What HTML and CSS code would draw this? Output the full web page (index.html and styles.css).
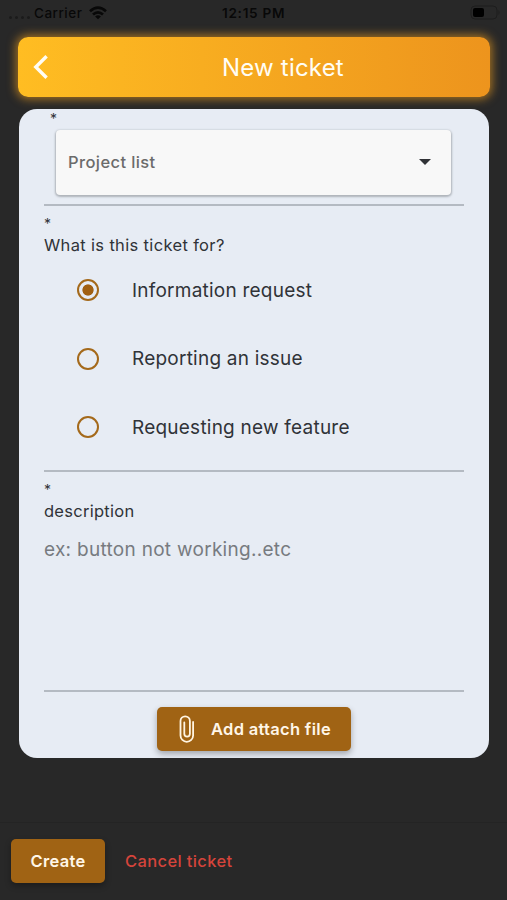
FILE: index.html
```html
<!DOCTYPE html>
<html lang="en">
<head>
<meta charset="utf-8">
<title>New ticket</title>
<link rel="stylesheet" href="styles.css">
</head>
<body>
<div class="status">
  <div class="carrier">
    <span class="dots"><i></i><i></i><i></i><i></i></span>
    <span class="carrier-name">Carrier</span>
    <svg width="18" height="14" viewBox="0 0 18 14" fill="none" stroke="#080808" stroke-width="2.7"><path d="M1 5.2Q9-2 17 5.2M4 8.6Q9 4.2 14 8.6"/><path d="M9 13.3L6.1 10.4Q9 8 11.9 10.4Z" fill="#080808" stroke="none"/></svg>
  </div>
  <span class="clock">12:15 PM</span>
  <svg class="battery" width="31" height="15" viewBox="0 0 31 15"><rect x="1" y="1" width="26" height="13" rx="4" fill="none" stroke="#1d1d1d"/><path d="M28.5 5Q30.5 7.5 28.5 10Z" fill="#1d1d1d"/><rect x="3" y="3" width="11" height="9" rx="2" fill="#000"/></svg>
</div>
<header class="header">
  <svg class="back" width="16" height="26" viewBox="0 0 16 26" fill="none" stroke="#fffdf5" stroke-width="3.4"><path d="M13.6 2.3L2.8 13L13.6 23.7"/></svg>
  <h1>New ticket</h1>
</header>
<main class="card">
  <section class="project">
    <div class="star">*</div>
    <div class="select"><span>Project list</span>
      <svg width="12" height="6" viewBox="0 0 12 6"><path d="M0 0H12L6 6Z" fill="#303236"/></svg>
    </div>
  </section>
  <section class="kind">
    <div class="star">*</div>
    <div class="label label-kind">What is this ticket for?</div>
    <div class="option"><span class="radio checked"></span><span>Information request</span></div>
    <div class="option"><span class="radio"></span><span>Reporting an issue</span></div>
    <div class="option"><span class="radio"></span><span>Requesting new feature</span></div>
  </section>
  <section class="description">
    <div class="star">*</div>
    <div class="label">description</div>
    <div class="placeholder">ex: button not working..etc</div>
  </section>
  <button class="btn attach">
    <svg width="16" height="28" viewBox="0 0 16 28" fill="none" stroke="#fff4e2" stroke-width="1.8" stroke-linecap="round"><path d="M14.1 7V20.5A6.3 6.3 0 0 1 1.5 20.5V6A4.7 4.7 0 0 1 10.9 6V18.8A2.8 2.8 0 0 1 5.3 18.8V7.5"/></svg>
    <span>Add attach file</span>
  </button>
</main>
<footer class="footer">
  <button class="btn create">Create</button>
  <span class="cancel">Cancel ticket</span>
</footer>
</body>
</html>
```
FILE: styles.css
```css
* { box-sizing: border-box; }
body {
  margin: 0;
  width: 507px;
  height: 900px;
  overflow: hidden;
  display: flex;
  flex-direction: column;
  background: #282828;
  color: #303338;
  font-family: Inter, "Liberation Sans", sans-serif;
}
.status {
  height: 37px;
  padding: 5px 6px 0 9px;
  display: grid;
  grid-template-columns: 213px 1fr auto;
  align-items: start;
  color: #080808;
  font-size: 13.5px;
  font-weight: 500;
  line-height: 16px;
}
.carrier { display: flex; align-items: center; }
.carrier svg { margin-left: 5px; }
.carrier-name { width: 50px; letter-spacing: 0.5px; }
.clock { letter-spacing: 0.7px; font-weight: 600; font-size: 13.6px; }
.dots { display: flex; gap: 3px; width: 25px; padding-top: 8px; }
.dots i { width: 3px; height: 3px; border-radius: 50%; background: #1b1b1b; }
.header {
  flex: none;
  width: 472px;
  height: 60px;
  margin-left: 18px;
  padding-left: 15px;
  display: flex;
  align-items: center;
  border-radius: 10px;
  background: linear-gradient(90deg, #ffbd22, #ed941d);
  box-shadow: 0 0 10px 2px rgba(237, 157, 31, 0.65);
  color: #fffdf5;
}
h1 { margin: 1px 0 0 173px; font-size: 24px; font-weight: 400; line-height: 30px; letter-spacing: 0.2px; white-space: nowrap; }
.card {
  flex: none;
  width: 470px;
  height: 649px;
  margin: 12px 0 0 19px;
  padding: 0 25px;
  display: flex;
  flex-direction: column;
  border-radius: 18px;
  overflow: hidden;
  background: #e7ecf4;
}
section { flex: none; border-bottom: 2px solid #b4bac2; }
.star { font-size: 14px; line-height: 14px; }
.project { height: 97px; padding: 3px 13px 0 12px; }
.project .star { margin-left: -6px; }
.select {
  height: 65px;
  margin-top: 4px;
  padding: 0 20px 2px 12px;
  display: flex;
  align-items: center;
  justify-content: space-between;
  border-radius: 4px;
  background: #f8f8f8;
  box-shadow: 0 1px 2px 1px rgba(90, 95, 100, 0.4);
  color: #6b6b6b;
  font-size: 16.5px;
  font-weight: 500;
  letter-spacing: 0.4px;
}
.select svg { margin-top: 1px; }
.kind { height: 266px; padding-top: 11px; }
.label { margin-top: 4px; font-size: 16.5px; line-height: 20px; letter-spacing: 0.27px; }
.label-kind { letter-spacing: 0.34px; }
.option { height: 68.5px; display: flex; align-items: center; gap: 33px; padding-left: 33px; font-size: 19px; letter-spacing: 0.23px; }
.radio { width: 22px; height: 22px; border: 2.5px solid #a4691a; border-radius: 50%; }
.checked { background: radial-gradient(circle, #a16012 5.2px, transparent 6px); }
.label + .option { margin-top: 1px; }
.description { height: 220px; padding-top: 11px; }
.placeholder { margin-top: 17px; color: #777b80; font-size: 19px; line-height: 24px; letter-spacing: 0.29px; }
.btn {
  height: 44px;
  border: 0;
  border-radius: 5px;
  background: #a06314;
  box-shadow: 0 3px 6px rgba(0, 0, 0, 0.3);
  color: #fff6e8;
  font: 600 16.5px/20px Inter, "Liberation Sans", sans-serif;
  letter-spacing: 0.3px;
  white-space: nowrap;
}
.attach {
  flex: none;
  width: 194px;
  margin: 15px 0 0 113px;
  padding: 0 0 0 22px;
  display: flex;
  align-items: center;
  gap: 16px;
}
.footer {
  height: 78px;
  margin-top: auto;
  padding: 0 11px 2px;
  display: flex;
  align-items: center;
  gap: 20px;
  border-top: 1px solid #242424;
}
.create { width: 94px; padding: 0; }
.cancel { color: #d5443b; font-size: 16.5px; font-weight: 500; letter-spacing: 0.38px; }
```
